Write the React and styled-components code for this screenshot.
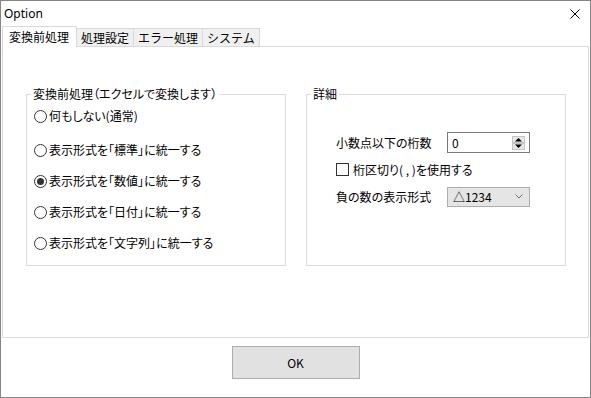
import React from 'react'
import styled, { createGlobalStyle } from 'styled-components'

const GlobalStyle = createGlobalStyle`
  body {
    margin: 0;
    background: #fff;
  }
`

const jp = `"Noto Sans CJK JP", "Noto Sans", sans-serif`

const Window = styled.div`
  width: 591px;
  height: 398px;
  box-sizing: border-box;
  border: 1px solid #858585;
  background: #fff;
  display: flex;
  flex-direction: column;
  font-family: ${jp};
  color: #000;
`

const TitleBar = styled.div`
  height: 25px;
  flex: none;
  display: flex;
  align-items: center;
  justify-content: space-between;
  padding: 0 10px 0 3px;
  font-family: "Noto Sans", sans-serif;
  font-size: 12px;
`

const TabRow = styled.div`
  height: 20px;
  flex: none;
  display: flex;
  align-items: flex-end;
  padding-left: 1px;
  position: relative;
  z-index: 1;
`

const Tab = styled.div`
  box-sizing: border-box;
  height: ${p => (p.$active ? '21px' : '18px')};
  margin-bottom: ${p => (p.$active ? '-1px' : '0')};
  padding: ${p => (p.$active ? '0 7px 0 6px' : '0 4px')};
  border: 1px solid #d9d9d9;
  border-bottom: none;
  border-left-width: ${p => (p.$active ? '1px' : '0')};
  background: ${p => (p.$active ? '#fff' : '#f0f0f0')};
  display: flex;
  align-items: center;
  font-size: 12px;
  line-height: 14px;
`

const Panel = styled.div`
  box-sizing: border-box;
  height: 292px;
  flex: none;
  margin: 0 1px;
  border: 1px solid #d9d9d9;
  display: flex;
  gap: 20px;
  padding: 40px 0 0 23px;
`

const Group = styled.fieldset`
  box-sizing: border-box;
  width: 260px;
  height: 179px;
  margin: 0;
  padding: 0;
  min-inline-size: 0;
  border: 1px solid #dcdcdc;
`

const Caption = styled.legend`
  margin-left: 4px;
  padding: 0 2px;
  font-size: 12px;
  line-height: 14px;
  font-feature-settings: "palt";
`

const RadioList = styled.div`
  display: flex;
  flex-direction: column;
  gap: 11px;
  padding: 5px 0 0 7px;

  & > :first-child {
    margin-bottom: 3px;
  }
`

const Option = styled.label`
  height: 20px;
  display: flex;
  align-items: center;
  gap: 2px;
  font-size: 12px;
  line-height: 14px;
  font-feature-settings: "palt";
`

const Radio = styled.span`
  box-sizing: border-box;
  width: 13px;
  height: 13px;
  flex: none;
  border: 1px solid #333;
  border-radius: 50%;
  background: #fff;
  display: flex;
  align-items: center;
  justify-content: center;

  &::after {
    content: '';
    width: 7px;
    height: 7px;
    border-radius: 50%;
    background: ${p => (p.$checked ? '#333' : 'transparent')};
  }
`

const DetailGrid = styled.div`
  display: grid;
  grid-template-columns: 111px 83px;
  grid-auto-rows: 21px;
  row-gap: 6px;
  align-items: center;
  padding: 31px 0 0 29px;
  font-size: 12px;
  line-height: 14px;
  font-feature-settings: "palt";
`

const CheckRow = styled.label`
  grid-column: 1 / -1;
  display: flex;
  align-items: center;
  gap: 4px;
`

const CheckBox = styled.span`
  box-sizing: border-box;
  width: 13px;
  height: 13px;
  border: 1px solid #333;
  background: #fff;
`

const SpinBox = styled.div`
  box-sizing: border-box;
  height: 21px;
  border: 1px solid #7a7a7a;
  background: #fff;
  display: flex;
  align-items: center;
  justify-content: space-between;
  padding: 0 4px 0 4px;
`

const Combo = styled.div`
  box-sizing: border-box;
  height: 20px;
  border: 1px solid #adadad;
  background: #e5e5e5;
  display: flex;
  align-items: center;
  justify-content: space-between;
  padding: 0 6px 0 5px;
`

const Footer = styled.div`
  flex: 1;
  display: flex;
  justify-content: center;
  align-items: flex-start;
  padding-top: 8px;
`

const Button = styled.button`
  box-sizing: border-box;
  width: 128px;
  height: 33px;
  border: 1px solid #adadad;
  background: #e1e1e1;
  font-family: ${jp};
  font-size: 12px;
  color: #000;
  padding: 0;
`

const CloseIcon = () => (
  <svg width="10" height="10" viewBox="0 0 10 10">
    <path d="M0.5 0.5L9.5 9.5M9.5 0.5L0.5 9.5" stroke="#000" strokeWidth="1" fill="none" />
  </svg>
)

const SpinArrows = () => (
  <svg width="13" height="14" viewBox="0 0 13 14">
    <rect x="0.5" y="0.5" width="12" height="6" fill="#e6e6e6" stroke="#c4c4c4" />
    <rect x="0.5" y="7.5" width="12" height="6" fill="#e6e6e6" stroke="#c4c4c4" />
    <path d="M3 5.5H10L6.5 2Z" fill="#000" />
    <path d="M3 8.5H10L6.5 12Z" fill="#000" />
  </svg>
)

const Chevron = () => (
  <svg width="8" height="5" viewBox="0 0 8 5">
    <path d="M0.5 0.5L4 4L7.5 0.5" stroke="#707070" strokeWidth="1" fill="none" />
  </svg>
)

const tabs = ['変換前処理', '処理設定', 'エラー処理', 'システム']

const modes = [
  '何もしない(通常)',
  '表示形式を「標準」に統一する',
  '表示形式を「数値」に統一する',
  '表示形式を「日付」に統一する',
  '表示形式を「文字列」に統一する',
]

export default function App() {
  return (
    <>
      <GlobalStyle />
      <Window>
        <TitleBar>
          <span>Option</span>
          <CloseIcon />
        </TitleBar>

        <TabRow>
          {tabs.map((t, i) => (
            <Tab key={t} $active={i === 0}>{t}</Tab>
          ))}
        </TabRow>

        <Panel>
          <Group>
            <Caption>変換前処理（エクセルで変換します）</Caption>
            <RadioList>
              {modes.map((m, i) => (
                <Option key={m}>
                  <Radio $checked={i === 2} />
                  {m}
                </Option>
              ))}
            </RadioList>
          </Group>

          <Group>
            <Caption>詳細</Caption>
            <DetailGrid>
              <span>小数点以下の桁数</span>
              <SpinBox>
                <span>0</span>
                <SpinArrows />
              </SpinBox>
              <CheckRow>
                <CheckBox />
                桁区切り( , )を使用する
              </CheckRow>
              <span>負の数の表示形式</span>
              <Combo>
                <span>△1234</span>
                <Chevron />
              </Combo>
            </DetailGrid>
          </Group>
        </Panel>

        <Footer>
          <Button>OK</Button>
        </Footer>
      </Window>
    </>
  )
}
